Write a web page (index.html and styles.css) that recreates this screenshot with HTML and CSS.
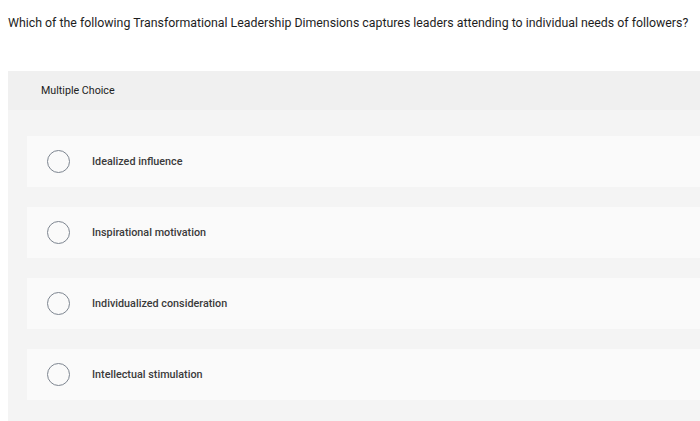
FILE: index.html
```html
<!DOCTYPE html>
<html>
<head>
<meta charset="utf-8">
<link rel="stylesheet" href="styles.css">
</head>
<body>
<div class="question">Which of the following Transformational Leadership Dimensions captures leaders attending to individual needs of followers?</div>
<div class="panel">
  <div class="panel-head">Multiple Choice</div>
  <div class="options">
    <div class="option"><span class="radio"></span><span class="label">Idealized influence</span></div>
    <div class="option"><span class="radio"></span><span class="label">Inspirational motivation</span></div>
    <div class="option"><span class="radio"></span><span class="label">Individualized consideration</span></div>
    <div class="option"><span class="radio"></span><span class="label">Intellectual stimulation</span></div>
  </div>
</div>
</body>
</html>
```
FILE: styles.css
```css
html, body {
  margin: 0;
  padding: 0;
  background: #ffffff;
}
body {
  font-family: "Roboto", "Liberation Sans", sans-serif;
  color: #222;
  width: 700px;
  height: 421px;
  overflow: hidden;
}
.question {
  font-size: 12.35px;
  line-height: 16px;
  padding: 15px 0 0 8px;
  height: 71px;
  box-sizing: border-box;
  color: #1e1e1e;
  white-space: nowrap;
}
.panel {
  margin-left: 8px;
  background: #f4f4f4;
  height: 350px;
}
.panel-head {
  background: #f0f0f0;
  height: 39px;
  box-sizing: border-box;
  padding: 14px 0 0 33px;
  font-size: 10.7px;
  line-height: 12px;
  color: #222;
}
.options {
  display: flex;
  flex-direction: column;
  gap: 20px;
  padding: 26px 0 0 19px;
}
.option {
  background: #fafafa;
  height: 51px;
  display: flex;
  align-items: center;
  padding-left: 20px;
}
.radio {
  width: 21px;
  height: 21px;
  border: 1.5px solid #7d8590;
  border-radius: 50%;
  flex: none;
}
.label {
  margin-left: 22px;
  font-size: 10.8px;
  font-weight: 500;
  color: #3a3a3a;
}
```
